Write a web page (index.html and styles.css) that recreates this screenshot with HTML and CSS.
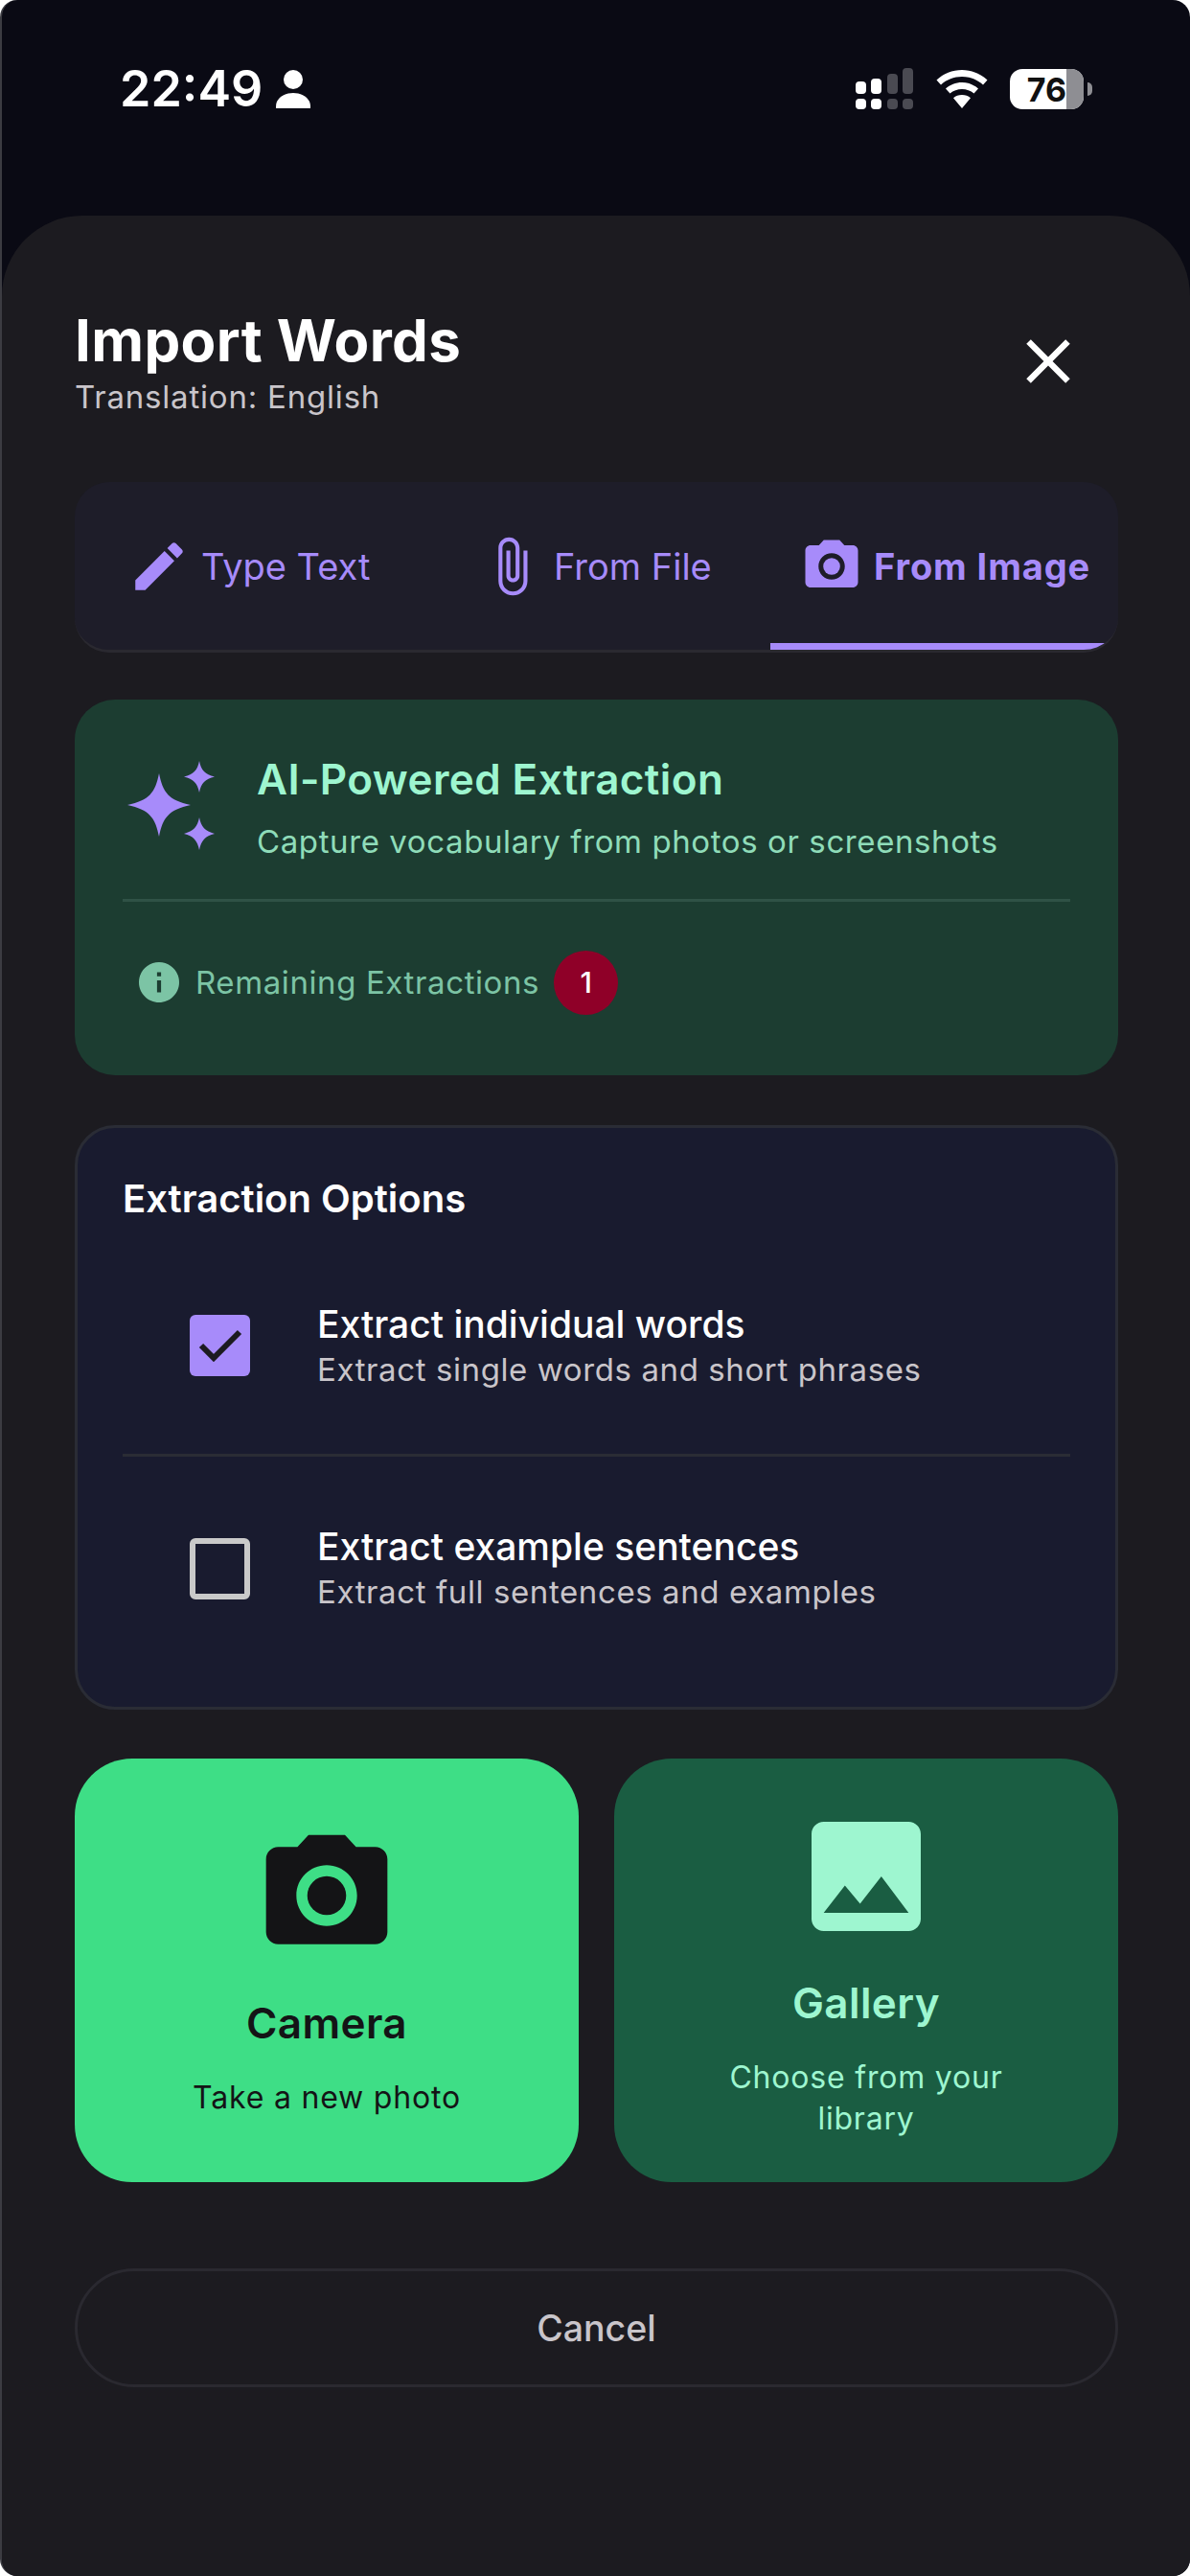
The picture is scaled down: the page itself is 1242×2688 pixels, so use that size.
FILE: index.html
```html
<!DOCTYPE html>
<html lang="en">
<head>
<meta charset="utf-8">
<title>Import Words</title>
<link rel="stylesheet" href="styles.css">
</head>
<body>
<div class="screen">
  <header class="status">
    <div class="status-left">
      <span class="time">22:49</span>
      <svg class="person" viewBox="0 0 36 40"><circle cx="18" cy="10" r="10" fill="#fff"/><path d="M0 40c0-2 0-5 1-7 3-6 10-9 17-9s14 3 17 9c1 2 1 5 1 7z" fill="#fff"/></svg>
    </div>
    <div class="status-right">
      <svg class="signal" viewBox="0 0 62 44">
        <g fill="#fff"><rect x="0" y="14" width="11" height="13" rx="4"/><rect x="16" y="11" width="11" height="16" rx="4"/><rect x="0" y="32" width="11" height="11" rx="4"/><rect x="16" y="32" width="11" height="11" rx="4"/></g>
        <g fill="#4a4a52"><rect x="33" y="6" width="11" height="21" rx="4"/><rect x="49" y="0" width="11" height="27" rx="4"/><rect x="33" y="32" width="11" height="11" rx="4"/><rect x="49" y="32" width="11" height="11" rx="4"/></g>
      </svg>
      <svg class="wifi" viewBox="0 0 54 40"><path fill="#fff" d="M27 0c10 0 19.500 4 26.500 10.500l-4.500 5C43 10 35.500 7 27 7S11 10 5 15.500l-4.500-5C7.500 4 17 0 27 0zM27 13c6.500 0 12.500 2.500 17 6.500l-4.500 5C36 21.500 31.700 20 27 20s-9 1.500-12.500 4.500l-4.500-5C14.500 15.500 20.500 13 27 13zM27 26c3.500 0 6.500 1 9 3.200L27 40l-9-10.800C20.500 27 23.500 26 27 26z"/></svg>
      <div class="battery">
        <div class="battery-body">
          <span class="battery-gray"></span>
          <span class="battery-text">76</span>
        </div>
        <span class="battery-nub"></span>
      </div>
    </div>
  </header>

  <main class="sheet">
    <div class="sheet-head">
      <div>
        <h1 class="title">Import Words</h1>
        <p class="subtitle">Translation: English</p>
      </div>
      <svg class="close" viewBox="0 0 24 24"><path fill="#fff" d="M19 6.410L17.590 5 12 10.590 6.410 5 5 6.410 10.590 12 5 17.590 6.410 19 12 13.410 17.590 19 19 17.590 13.410 12z"/></svg>
    </div>

    <nav class="tabs">
      <div class="tab tab-type">
        <svg class="tab-icon" viewBox="0 0 24 24"><path d="M3 17.250V21h3.750L17.810 9.940l-3.750-3.750L3 17.250zM20.710 7.040c.39-.39.39-1.020 0-1.410l-2.340-2.340c-.39-.39-1.020-.39-1.410 0l-1.830 1.830 3.750 3.750 1.830-1.830z"/></svg>
        <span>Type Text</span>
      </div>
      <div class="tab tab-file">
        <svg class="tab-icon" viewBox="0 0 24 24"><path d="M16.500 6v11.500c0 2.210-1.790 4-4 4s-4-1.790-4-4V5c0-1.380 1.120-2.500 2.500-2.500s2.500 1.120 2.500 2.500v10.500c0 .55-.45 1-1 1s-1-.45-1-1V6H10v9.500c0 1.380 1.120 2.500 2.500 2.500s2.500-1.120 2.500-2.500V5c0-2.210-1.790-4-4-4S7 2.790 7 5v12.500c0 3.040 2.460 5.500 5.500 5.500s5.500-2.460 5.500-5.500V6h-1.500z"/></svg>
        <span>From File</span>
      </div>
      <div class="tab tab-image">
        <svg class="tab-icon" viewBox="0 0 24 24"><circle cx="12" cy="12" r="3.200"/><path d="M9 2L7.170 4H4c-1.100 0-2 .9-2 2v12c0 1.100.9 2 2 2h16c1.100 0 2-.9 2-2V6c0-1.100-.9-2-2-2h-3.170L15 2H9zm3 15c-2.760 0-5-2.240-5-5s2.240-5 5-5 5 2.240 5 5-2.240 5-5 5z"/></svg>
        <span>From Image</span>
      </div>
      <span class="tab-underline"></span>
    </nav>

    <section class="ai-card">
      <div class="ai-head">
        <svg class="sparkles" viewBox="0 0 92 94">
          <path d="M33 13c4 20 10 28 33 33-23 5-29 13-33 33-4-20-10-28-33-33 23-5 29-13 33-33z"/>
          <path d="M75 0c2 10 6 14 16 16.500C81 19 77 23 75 33c-2-10-6-14-16-16.500C69 14 73 10 75 0z"/>
          <path d="M75 59c2 10 6 14 16 17-10 2.500-14 7-16 17-2-10-6-14.500-16-17 10-3 14-7 16-17z"/>
        </svg>
        <div>
          <h2 class="ai-title">AI-Powered Extraction</h2>
          <p class="ai-desc">Capture vocabulary from photos or screenshots</p>
        </div>
      </div>
      <div class="ai-foot">
        <svg class="info" viewBox="2 2 20 20"><path d="M12 2C6.480 2 2 6.480 2 12s4.480 10 10 10 10-4.480 10-10S17.520 2 12 2zm1 15h-2v-6h2v6zm0-8h-2V7h2v2z"/></svg>
        <span class="ai-remaining">Remaining Extractions</span>
        <span class="badge">1</span>
      </div>
    </section>

    <section class="options">
      <h3 class="options-title">Extraction Options</h3>
      <div class="option option-first">
        <span class="checkbox checked">
          <svg class="check" viewBox="0 0 46 34"><path d="M3 17l13 13L43 3" fill="none" stroke="#1c1b20" stroke-width="6"/></svg>
        </span>
        <div>
          <div class="option-name">Extract individual words</div>
          <div class="option-desc">Extract single words and short phrases</div>
        </div>
      </div>
      <div class="option">
        <span class="checkbox"></span>
        <div>
          <div class="option-name">Extract example sentences</div>
          <div class="option-desc">Extract full sentences and examples</div>
        </div>
      </div>
    </section>

    <div class="sources">
      <div class="source source-camera">
        <svg class="source-icon" viewBox="0 0 24 24"><circle cx="12" cy="12" r="3.200" fill="#141416"/><path fill="#141416" d="M9 2L7.170 4H4c-1.100 0-2 .9-2 2v12c0 1.100.9 2 2 2h16c1.100 0 2-.9 2-2V6c0-1.100-.9-2-2-2h-3.170L15 2H9zm3 15c-2.760 0-5-2.240-5-5s2.240-5 5-5 5 2.240 5 5-2.240 5-5 5z"/></svg>
        <div class="source-name">Camera</div>
        <div class="source-desc">Take a new photo</div>
      </div>
      <div class="source source-gallery">
        <svg class="source-icon" viewBox="0 0 24 24"><path fill="#9ef6d0" d="M21 19V5c0-1.100-.9-2-2-2H5c-1.100 0-2 .9-2 2v14c0 1.100.9 2 2 2h14c1.100 0 2-.9 2-2zM8.500 13.500l2.500 3.010L14.500 12l4.500 6H5l3.500-4.500z"/></svg>
        <div class="source-name">Gallery</div>
        <div class="source-desc">Choose from your library</div>
      </div>
    </div>

    <div class="cancel">Cancel</div>
  </main>
</div>
</body>
</html>
```

FILE: styles.css
```css
* { box-sizing: border-box; margin: 0; padding: 0; }
html, body { background: #fff; }
body { width: 1242px; height: 2688px; overflow: hidden; font-family: Inter, "Noto Sans", sans-serif; }
.screen { width: 1242px; height: 2688px; display: flex; flex-direction: column; background: #0a0a14; border-radius: 18px; border-left: 2px solid #3c3c42; overflow: hidden; }

.status { height: 225px; flex: none; padding: 71px 102px 0 123px; display: flex; justify-content: space-between; align-items: flex-start; }
.status-left { display: flex; align-items: center; gap: 14px; height: 44px; }
.time { font-size: 52px; line-height: 44px; font-weight: 600; color: #fff; }
.person { width: 36px; height: 40px; }
.status-right { display: flex; align-items: center; height: 44px; }
.signal { width: 62px; height: 44px; margin-right: 22px; }
.wifi { width: 54px; height: 40px; margin-right: 23px; }
.battery { display: flex; align-items: center; gap: 4px; }
.battery-body { position: relative; width: 77px; height: 42px; border-radius: 13px; background: #fff; overflow: hidden; display: flex; align-items: center; justify-content: center; }
.battery-gray { position: absolute; top: 0; right: 0; bottom: 0; width: 18px; background: #8e8e93; }
.battery-text { position: relative; font-size: 34px; font-weight: 700; color: #111; }
.battery-nub { width: 5px; height: 14px; background: #8e8e93; border-radius: 0 5px 5px 0; }

.sheet { flex: 1; background: #1c1b20; border-radius: 84px 84px 0 0; padding: 90px 75px 0 76px; display: flex; flex-direction: column; }
.sheet-head { display: flex; justify-content: space-between; align-items: flex-start; height: 188px; }
.title { font-size: 60px; line-height: 80px; font-weight: 700; letter-spacing: 0.4px; color: #fff; }
.subtitle { font-size: 33px; line-height: 38px; font-weight: 400; letter-spacing: 0.8px; color: #c9c5ca; }
.close { width: 78px; height: 78px; margin: 23px 34px 0 0; }

.tabs { position: relative; height: 178px; flex: none; background: #1e1d29; border-radius: 36px; border-bottom: 3px solid #2a2930; overflow: hidden; }
.tab { position: absolute; top: 0; height: 175px; display: flex; align-items: center; gap: 11px; font-size: 38px; color: #a78bfa; }
.tab-type { left: 55px; }
.tab-file { left: 423px; }
.tab-image { left: 757px; font-weight: 700; letter-spacing: 0.9px; }
.tab-icon { width: 66px; height: 66px; fill: #a78bfa; flex: none; }
.tab-underline { position: absolute; left: 726px; right: 11px; bottom: -3px; height: 10px; background: #a78bfa; border-radius: 0 0 30px 0; }

.ai-card { margin-top: 49px; height: 392px; flex: none; background: #1c3d31; border-radius: 42px; padding: 55px 50px 0 50px; }
.ai-head { display: flex; align-items: flex-start; gap: 43px; height: 156px; border-bottom: 3px solid #2f5246; }
.sparkles { width: 92px; height: 94px; fill: #a78bfa; margin: 9px 0 0 5px; flex: none; }
.ai-title { font-size: 44px; line-height: 56px; font-weight: 600; letter-spacing: 0.4px; color: #9ef6d0; }
.ai-desc { margin-top: 15px; font-size: 33px; line-height: 44px; font-weight: 400; letter-spacing: 0.6px; color: #8fdcb9; }
.ai-foot { display: flex; align-items: center; margin-top: 50px; padding-left: 17px; height: 68px; }
.info { width: 42px; height: 42px; fill: #7cc4a5; }
.ai-remaining { margin-left: 17px; font-size: 33px; letter-spacing: 0.6px; color: #7cc4a5; }
.badge { margin-left: 15px; width: 67px; height: 67px; border-radius: 50%; background: #8f0028; color: #fff; font-size: 30px; font-weight: 500; display: flex; align-items: center; justify-content: center; }

.options { margin-top: 52px; height: 610px; flex: none; background: #191b2f; border: 3px solid #2a2c35; border-radius: 42px; padding: 47px 47px 0 47px; }
.options-title { font-size: 40px; line-height: 54px; font-weight: 600; color: #fff; }
.option { display: flex; align-items: center; gap: 70px; padding-left: 70px; height: 233px; }
.option-first { height: 242px; border-bottom: 3px solid #2a2c35; padding-top: 13px; }
.checkbox { width: 63px; height: 64px; flex: none; border: 6px solid #c9c9c9; border-radius: 6px; display: flex; align-items: center; justify-content: center; }
.checkbox.checked { background: #a78bfa; border: none; }
.check { width: 46px; height: 34px; }
.option-name { font-size: 39px; line-height: 44px; font-weight: 500; color: #fff; }
.option-desc { margin-top: 5px; font-size: 33px; line-height: 40px; letter-spacing: 0.6px; color: #c9c5ca; }

.sources { margin-top: 51px; display: flex; gap: 37px; flex: none; height: 442px; }
.source { flex: 1; border-radius: 60px; display: flex; flex-direction: column; align-items: center; text-align: center; }
.source-camera { background: #3ede86; color: #141416; padding-top: 67px; }
.source-gallery { background: #1a5d42; color: #9ef6d0; padding-top: 47px; }
.source-icon { width: 152px; height: 152px; flex: none; }
.source-name { margin-top: 29px; font-size: 44px; line-height: 56px; font-weight: 600; letter-spacing: 0.4px; }
.source-gallery .source-name { margin-top: 28px; }
.source-desc { margin-top: 28px; width: 340px; font-size: 32px; line-height: 43px; letter-spacing: 0.8px; }

.cancel { margin-top: 90px; height: 124px; flex: none; border: 3px solid #2a2930; border-radius: 62px; display: flex; align-items: center; justify-content: center; font-size: 37.5px; font-weight: 500; color: #c9c5ca; }
```
